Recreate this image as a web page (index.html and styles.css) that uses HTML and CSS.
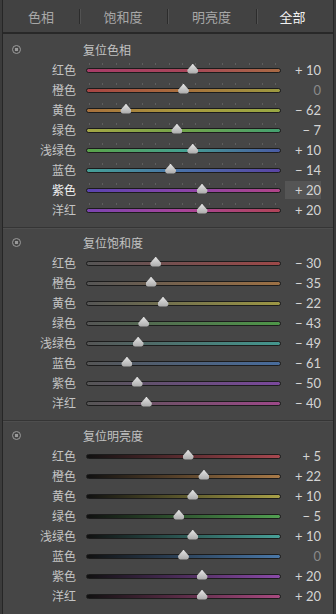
FILE: index.html
```html
<!DOCTYPE html>
<html lang="zh-CN">
<head>
    <meta charset="UTF-8">
    <meta name="viewport" content="width=device-width, initial-scale=1.0">
    <title>HSL</title>
    <link rel="stylesheet" href="styles.css">
</head>
<body>
    <div class="panel">
        <div class="tabs">
            <div class="tab">色相</div>
            <div class="tab">饱和度</div>
            <div class="tab">明亮度</div>
            <div class="tab active">全部</div>
        </div>

        <!-- 色相 -->
        <div class="section hue">
            <div class="header"><span class="reset-icon"></span><span class="title">复位色相</span></div>
            <div class="row red"><span class="label">红色</span><div class="track"><span class="thumb" style="left: 54.8%"></span></div><span class="value">+ 10</span></div>
            <div class="row orange"><span class="label">橙色</span><div class="track"><span class="thumb" style="left: 50%"></span></div><span class="value zero">0</span></div>
            <div class="row yellow"><span class="label">黄色</span><div class="track"><span class="thumb" style="left: 20.2%"></span></div><span class="value">− 62</span></div>
            <div class="row green"><span class="label">绿色</span><div class="track"><span class="thumb" style="left: 46.6%"></span></div><span class="value">− 7</span></div>
            <div class="row aqua"><span class="label">浅绿色</span><div class="track"><span class="thumb" style="left: 54.8%"></span></div><span class="value">+ 10</span></div>
            <div class="row blue"><span class="label">蓝色</span><div class="track"><span class="thumb" style="left: 43.3%"></span></div><span class="value">− 14</span></div>
            <div class="row purple active"><span class="label">紫色</span><div class="track"><span class="thumb" style="left: 59.6%"></span></div><span class="value">+ 20</span></div>
            <div class="row magenta"><span class="label">洋红</span><div class="track"><span class="thumb" style="left: 59.6%"></span></div><span class="value">+ 20</span></div>
        </div>

        <!-- 饱和度 -->
        <div class="section sat">
            <div class="header"><span class="reset-icon"></span><span class="title">复位饱和度</span></div>
            <div class="row red"><span class="label">红色</span><div class="track"><span class="thumb" style="left: 35.6%"></span></div><span class="value">− 30</span></div>
            <div class="row orange"><span class="label">橙色</span><div class="track"><span class="thumb" style="left: 33.2%"></span></div><span class="value">− 35</span></div>
            <div class="row yellow"><span class="label">黄色</span><div class="track"><span class="thumb" style="left: 39.4%"></span></div><span class="value">− 22</span></div>
            <div class="row green"><span class="label">绿色</span><div class="track"><span class="thumb" style="left: 29.4%"></span></div><span class="value">− 43</span></div>
            <div class="row aqua"><span class="label">浅绿色</span><div class="track"><span class="thumb" style="left: 26.5%"></span></div><span class="value">− 49</span></div>
            <div class="row blue"><span class="label">蓝色</span><div class="track"><span class="thumb" style="left: 20.7%"></span></div><span class="value">− 61</span></div>
            <div class="row purple"><span class="label">紫色</span><div class="track"><span class="thumb" style="left: 26%"></span></div><span class="value">− 50</span></div>
            <div class="row magenta"><span class="label">洋红</span><div class="track"><span class="thumb" style="left: 30.8%"></span></div><span class="value">− 40</span></div>
        </div>

        <!-- 明亮度 -->
        <div class="section lum">
            <div class="header"><span class="reset-icon"></span><span class="title">复位明亮度</span></div>
            <div class="row red"><span class="label">红色</span><div class="track"><span class="thumb" style="left: 52.4%"></span></div><span class="value">+ 5</span></div>
            <div class="row orange"><span class="label">橙色</span><div class="track"><span class="thumb" style="left: 60.6%"></span></div><span class="value">+ 22</span></div>
            <div class="row yellow"><span class="label">黄色</span><div class="track"><span class="thumb" style="left: 54.8%"></span></div><span class="value">+ 10</span></div>
            <div class="row green"><span class="label">绿色</span><div class="track"><span class="thumb" style="left: 47.6%"></span></div><span class="value">− 5</span></div>
            <div class="row aqua"><span class="label">浅绿色</span><div class="track"><span class="thumb" style="left: 54.8%"></span></div><span class="value">+ 10</span></div>
            <div class="row blue"><span class="label">蓝色</span><div class="track"><span class="thumb" style="left: 50%"></span></div><span class="value zero">0</span></div>
            <div class="row purple"><span class="label">紫色</span><div class="track"><span class="thumb" style="left: 59.6%"></span></div><span class="value">+ 20</span></div>
            <div class="row magenta"><span class="label">洋红</span><div class="track"><span class="thumb" style="left: 59.6%"></span></div><span class="value">+ 20</span></div>
        </div>
    </div>
</body>
</html>
```

FILE: styles.css
```css
body {
    margin: 0;
    background-color: #3b3b3b;
    font-family: "Noto Sans CJK SC", "Lato", sans-serif;
    color: #c6c6c6;
}

.panel {
    margin: 0 2px;
    height: 614px;
    background-color: #464646;
    border-left: 1px solid #262626;
    border-right: 1px solid #262626;
    box-sizing: border-box;
}

/* 标签栏 */
.tabs {
    display: grid;
    grid-template-columns: 76px 88px 89px 1fr;
    height: 32px;
    padding-right: 4px;
    background-color: #424242;
    border-bottom: 2px solid #282828;
}

.tab {
    display: flex;
    align-items: center;
    justify-content: center;
    font-size: 13px;
    color: #a8a8a8;
    position: relative;
}

.tab + .tab::before {
    content: "";
    position: absolute;
    left: 0;
    top: 9px;
    width: 1px;
    height: 15px;
    background-color: #2c2c2c;
    border-right: 1px solid #525252;
}

.tab.active {
    color: #f2f2f2;
}

/* 分组 */
.section {
    padding: 5px 0 7px;
}

.section + .section {
    border-top: 1px solid #353535;
    box-shadow: inset 0 1px 0 #4e4e4e;
    padding-top: 4px;
}

.header {
    display: flex;
    align-items: center;
    height: 21px;
}

.reset-icon {
    width: 7px;
    height: 7px;
    margin-left: 9px;
    border: 1.5px solid #9a9a9a;
    border-radius: 50%;
    background: radial-gradient(circle, #9a9a9a 0 1.5px, transparent 2px);
}

.title {
    margin-left: 62px;
    font-size: 12px;
    color: #c2c2c2;
}

.row {
    display: flex;
    align-items: center;
    height: 20px;
}

.label {
    width: 73px;
    text-align: right;
    font-size: 12px;
    line-height: 20px;
    color: #c4c4c4;
}

.row.active .label {
    color: #f4f4f4;
}

.track {
    position: relative;
    width: 193px;
    height: 3px;
    margin-left: 10px;
    border: 1px solid #1c1c1c;
    border-radius: 3px;
}

.hue .track::before {
    content: "";
    position: absolute;
    left: 2px;
    right: 2px;
    top: -6px;
    height: 2px;
    background: repeating-linear-gradient(to right, rgba(255, 255, 255, 0.13) 0 1px, transparent 1px 13.3px);
}

.thumb {
    position: absolute;
    top: -5px;
    width: 11px;
    height: 10px;
    margin-left: -5.5px;
    background: linear-gradient(#e4e4e4, #a9a9a9);
    clip-path: polygon(50% 0, 62% 18%, 100% 65%, 96% 90%, 80% 100%, 20% 100%, 4% 90%, 0 65%, 38% 18%);
}

.value {
    width: 36px;
    margin-left: 4px;
    text-align: right;
    font-family: "Lato", "Liberation Sans", sans-serif;
    font-size: 13px;
    line-height: 18px;
    color: #d4d4d4;
}

.value.zero {
    color: #8a8a8a;
}

.row.active .value {
    background-color: #555555;
}

/* 色相轨道 */
.hue .red .track { background: linear-gradient(to right, #a83c68, #a8455a, #a86a44); }
.hue .orange .track { background: linear-gradient(to right, #a84444, #a8703c, #9c9a40); }
.hue .yellow .track { background: linear-gradient(to right, #a8703c, #a89a3e, #98a844); }
.hue .green .track { background: linear-gradient(to right, #a4a644, #72a44a, #44a070); }
.hue .aqua .track { background: linear-gradient(to right, #5aa448, #44a090, #4a5aa4); }
.hue .blue .track { background: linear-gradient(to right, #44a096, #4a70a8, #5a44a4); }
.hue .purple .track { background: linear-gradient(to right, #5a44b0, #8a44a8, #b04488); }
.hue .magenta .track { background: linear-gradient(to right, #7a44b0, #a84498, #b04458); }

/* 饱和度轨道 */
.sat .red .track { background: linear-gradient(to right, #555555, #9c4848); }
.sat .orange .track { background: linear-gradient(to right, #555555, #9c7044); }
.sat .yellow .track { background: linear-gradient(to right, #555555, #9c9644); }
.sat .green .track { background: linear-gradient(to right, #555555, #4e9648); }
.sat .aqua .track { background: linear-gradient(to right, #555555, #44968e); }
.sat .blue .track { background: linear-gradient(to right, #555555, #486c9c); }
.sat .purple .track { background: linear-gradient(to right, #555555, #7a489c); }
.sat .magenta .track { background: linear-gradient(to right, #555555, #9c4888); }

/* 明亮度轨道 */
.lum .red .track { background: linear-gradient(to right, #111111, #a84850); }
.lum .orange .track { background: linear-gradient(to right, #111111, #a87a48); }
.lum .yellow .track { background: linear-gradient(to right, #111111, #a8a048); }
.lum .green .track { background: linear-gradient(to right, #111111, #52a052); }
.lum .aqua .track { background: linear-gradient(to right, #111111, #48a098); }
.lum .blue .track { background: linear-gradient(to right, #111111, #4a78a8); }
.lum .purple .track { background: linear-gradient(to right, #111111, #8a4aa8); }
.lum .magenta .track { background: linear-gradient(to right, #111111, #a84a80); }
```
